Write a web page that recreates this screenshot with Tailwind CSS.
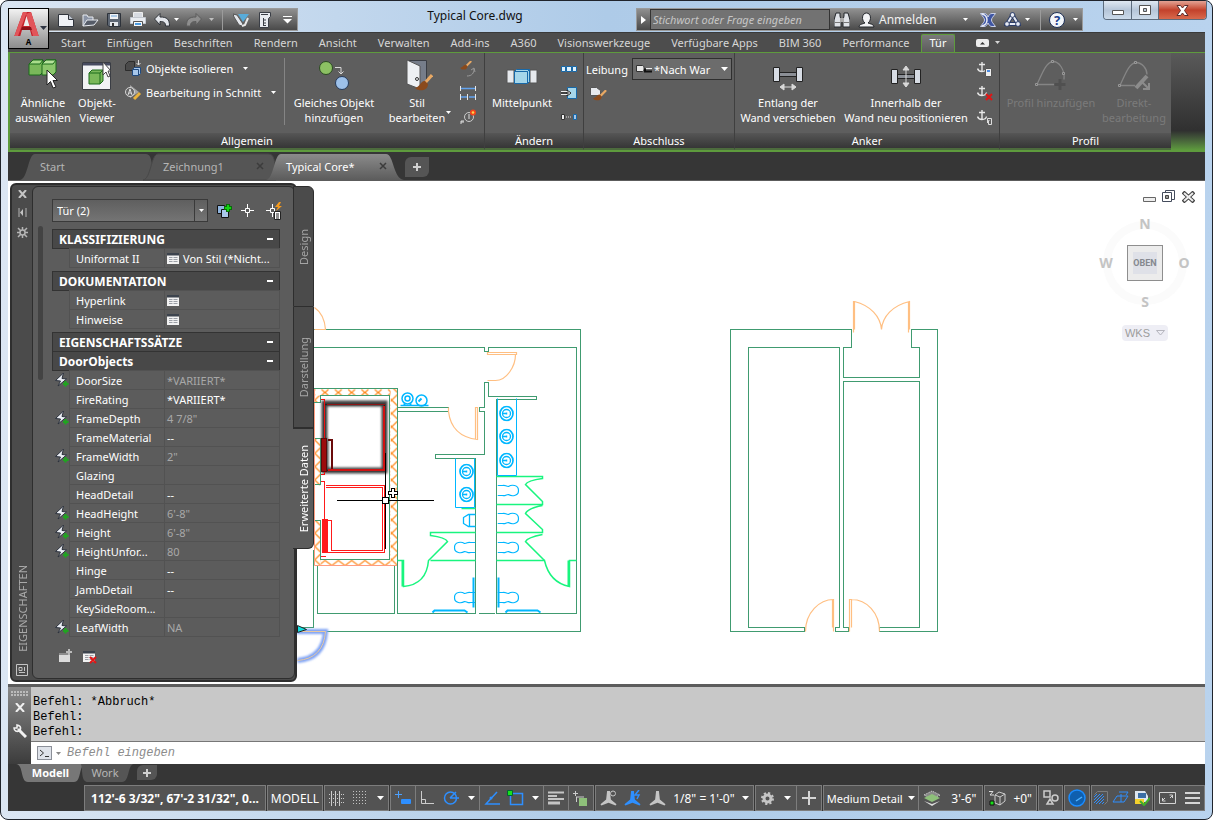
<!DOCTYPE html>
<html lang="de">
<head>
    <meta charset="UTF-8">
    <title>Typical Core.dwg</title>
    <script src="https://cdn.jsdelivr.net/npm/@tailwindcss/browser@4"></script>
</head>
<body class="bg-white font-['Noto_Sans',sans-serif] text-[11px] leading-[15px] text-white cursor-default">

    <!-- shared symbols -->
    <svg class="hidden">
        <symbol id="caret" viewBox="0 0 7 4"><path d="M0 0h7L3.500 4z" fill="currentColor"/></symbol>
        <symbol id="basin" viewBox="-8 -8 16 16"><g fill="none" stroke="#00b7ff"><ellipse rx="6.500" ry="7" stroke-width="1.700"/><circle r="4" stroke-width="1.300"/><path d="M-4 0h4M0-1v2" stroke-width="1.500"/></g></symbol>
        <symbol id="toilet" viewBox="0 -8 22 16"><path d="M0-5H5C8-6 8-4 11-4C14-6 21-6 21 0C21 6 14 6 11 4C8 4 8 6 5 5H0" fill="none" stroke="#00b7ff" stroke-width="1.200"/></symbol>
        <symbol id="anchor" viewBox="0 0 14 14"><path d="M5 1v9M2 3.500h6M0.500 7.500c1 3 3 3 4.500 3s4 0 4.500-3" fill="none" stroke="#e8e8e8" stroke-width="1.400"/></symbol>
        <symbol id="sheet" viewBox="0 0 12 11"><path d="M0 0h12v11H0z" fill="#f2f2f2"/><path d="M0 0h12v2.500H0z" fill="#3c434d"/><path d="M2 4.500h3.500M6.500 4.500h4M2 6.500h3.500M6.500 6.500h4M2 8.500h3.500M6.500 8.500h4" stroke="#9b9fa6"/></symbol>
        <symbol id="bolt" viewBox="0 0 14 14"><path d="M8.500 0L0.500 7.500l5 .5L3 13l8.500-7-4.500-.5z" fill="#eceff5" stroke="#2b313c"/><path d="M10.500 8v5.500M8 10.800h5.500" stroke="#1fa51f" stroke-width="2.200"/></symbol>
        <symbol id="scale" viewBox="0 0 18 18"><path d="M7.500 1h3l1 9 6 5-1 1.500-7.500-3-7.500 3-1-1.500 6-5z" fill="currentColor"/></symbol>
        <symbol id="brush" viewBox="0 0 16 12"><path d="M15 0L8 7" stroke="#e9a964" stroke-width="2.500"/><path d="M8 5c-3-1-4 4-8 4 3 4 10 3 10-2z" fill="#8a4a1c"/></symbol>
    </svg>

    <div class="h-screen flex flex-col rounded-lg border border-[#20242c] bg-[#b9d1ea] bg-gradient-to-r from-[#dbe6f3] via-[#aecbe8] to-[#b9d3ee] px-[7px] pt-[7px] pb-[8px] relative overflow-hidden">

        <!-- title bar -->
        <header class="h-[24px] shrink-0 flex relative">
            <div class="ml-[41px] w-[249px] h-[23px] shrink-0 flex items-center bg-gradient-to-b from-[#909090] to-[#4a4a4a] border border-[#9a9a9a] border-l-0 pl-[5px]">
                <button class="w-6 flex justify-center" aria-label="Neu"><svg width="16" height="14"><path d="M.5 1.500h10l5 5v7H.5z" fill="#f0f2f6" stroke="#30343c"/><path d="M10.500 1.500v5h5" fill="#c2c8d2" stroke="#30343c"/></svg></button>
                <button class="w-6 flex justify-center" aria-label="Öffnen"><svg width="17" height="14"><path d="M1 13V2h4l1 2h5v3" fill="#8b94a6" stroke="#e8ebf0"/><path d="M1 13L5 7h11l-4 5z" fill="#565c68" stroke="#e8ebf0"/></svg></button>
                <button class="w-6 flex justify-center" aria-label="Speichern"><svg width="14" height="14"><path d="M.5.5h13v13H2L.5 12z" fill="#5d6673" stroke="#2d323a"/><path d="M3 1h8v5H3z" fill="#f0f2f5"/><path d="M3 9h8v4H3z" fill="#e3e6ea"/><path d="M5 10h2v3H5z" fill="#333"/><path d="M4 3h6" stroke="#6aa4dc"/></svg></button>
                <button class="w-6 flex justify-center" aria-label="Plotten"><svg width="16" height="15"><path d="M3.500.5h9v6h-9z" fill="#d7dbe2" stroke="#eee"/><path d="M.5 5.500h15v6H.5z" fill="#e9ecf1" stroke="#c2c7cf"/><path d="M3.500 9.500h9v5h-9z" fill="#f6f8fa" stroke="#555"/><path d="M5 12h6" stroke="#4c9be0" stroke-width="2"/></svg></button>
                <button class="w-6 flex justify-center" aria-label="Zurück"><svg width="16" height="14"><path d="M6 .5v3.500c7 0 9.500 2 9.500 9h-4c0-3-1-4.500-5.500-4.500V12L.5 6z" fill="#e3e6eb" stroke="#2f3339"/></svg></button>
                <svg class="text-white" width="5" height="3"><use href="#caret" width="5" height="3"/></svg>
                <button class="w-[30px] flex justify-center" aria-label="Wiederherstellen"><svg width="16" height="14"><path d="M10 .5v3.500c-7 0-9.500 2-9.500 9h4c0-3 1-4.500 5.500-4.500V12l5.500-6z" fill="#8e8e8e" stroke="#5c5c5c"/></svg></button>
                <svg class="text-[#c0c0c0]" width="5" height="3"><use href="#caret" width="5" height="3"/></svg>
                <span class="w-px h-5 ml-2 bg-[#9b9b9b]"></span>
                <button class="ml-2 w-5 flex justify-center" aria-label="Plan"><svg width="17" height="14"><path d="M5 1h11l-6 8z" fill="#58abd9"/><path d="M0 1l4 1 6 9-1 2-3-1-5-8z" fill="#e4e7ec" stroke="#555"/><path d="M15 5l-3 7-3 1" fill="none" stroke="#e8e8e8" stroke-width="2"/></svg></button>
                <button class="ml-1 w-5 flex justify-center" aria-label="Projekt"><svg width="12" height="16"><path d="M.5.5h11v4l-2 2v9h-9z" fill="#e8ebf0" stroke="#3a3e46"/><path d="M2 2.500h7M4.500 6v8M4 8h3M4 11h3M4 13.500h3" stroke="#3a3e46"/></svg></button>
                <svg class="ml-2" width="9" height="8"><path d="M0 .5h9" stroke="#fff"/><path d="M0 3h9L4.500 7.500z" fill="#fff"/></svg>
            </div>
            <h1 class="flex-1 pl-4 text-center text-[#111] text-[12px] leading-4">Typical Core.dwg</h1>
            <div class="w-[447px] h-[23px] shrink-0 flex items-center bg-gradient-to-b from-[#909090] to-[#4a4a4a] border border-[#9a9a9a]">
                <svg class="mx-1" width="5" height="8"><path d="M0 0l5 4-5 4z" fill="#fff"/></svg>
                <input type="text" placeholder="Stichwort oder Frage eingeben" aria-label="Suche" class="w-[180px] h-full bg-[#727272] border border-[#333] px-0.5 italic placeholder:text-[#c6c6c6]">
                <svg class="ml-1" width="16" height="16"><path d="M2 1h4v3l1 4v7H0V8zM10 1h4l2 7v7H9V8l1-4z" fill="#dfe2e7" stroke="#25282d"/><path d="M6 6h4v4H6z" fill="#aaa"/><path d="M1 10.500h5M10 10.500h5" stroke="#777"/></svg>
                <button class="ml-2 flex items-center gap-1 text-[12px] text-[#f0f0f0]"><svg width="17" height="16"><path d="M1 15c0-3 4-3 6-4C3 8 4 1 8.500 1S14 8 10 11c2 1 6 1 6 4z" fill="#f2f3f5" stroke="#25282d"/></svg>Anmelden</button>
                <svg class="ml-auto" width="5" height="3"><use href="#caret" width="5" height="3"/></svg>
                <svg class="ml-3" width="16" height="14"><path d="M.5.5h4c2 0 3 2 3.500 3.500C9 2 10 .5 12 .5h3.500C13 4 11.500 5 11.500 7s1.500 3 4 6.500H12c-2 0-3-1.500-4-3.500-1 2-2 3.500-4 3.500H.5C3 10 4.500 9 4.500 7S3 4 .5.5z" fill="#3e55a3" stroke="#c9d0e8"/><path d="M2 1c4 1 5 4 5 6s-1 5-5 6" fill="none" stroke="#e8ebf5" stroke-width="1.500"/></svg>
                <svg class="ml-2" width="17" height="15"><path d="M8.500 3L3 12h11z" fill="none" stroke="#2b3c66" stroke-width="4"/><path d="M8.500 3L3 12h11z" fill="none" stroke="#e8ecf5" stroke-width="2"/><g fill="#e8ecf5" stroke="#2b3c66"><circle cx="8.500" cy="3" r="2.400"/><circle cx="3" cy="12" r="2.400"/><circle cx="14" cy="12" r="2.400"/></g></svg>
                <svg class="ml-1" width="5" height="3"><use href="#caret" width="5" height="3"/></svg>
                <span class="ml-2.5 w-px h-5 bg-[#9b9b9b]"></span>
                <button class="ml-2 size-4 rounded-full bg-[#f2f5fa] border border-[#1d2f55] text-[#1b3f8e] text-[13px] leading-[14px] font-bold">?</button>
                <svg class="ml-2 mr-1" width="5" height="3"><use href="#caret" width="5" height="3"/></svg>
            </div>
            <div class="ml-[20px] -mt-[7px] mb-[6px] mr-[-2px] w-[104px] h-[19px] shrink-0 flex border border-t-0 border-[#5c6b7c] rounded-b overflow-hidden">
                <button aria-label="Minimieren" class="w-[28px] flex items-end justify-center pb-1 bg-gradient-to-b from-[#dfe8f2] via-[#b5c5d8] to-[#ccdbea] border-r border-[#5c6b7c]"><svg width="12" height="5"><path d="M.5.5h11v4H.5z" fill="#fff" stroke="#555"/></svg></button>
                <button aria-label="Maximieren" class="w-[27px] flex items-center justify-center bg-gradient-to-b from-[#dfe8f2] via-[#b5c5d8] to-[#ccdbea] border-r border-[#5c6b7c]"><svg width="12" height="10"><path d="M.5.5h11v9H.5z" fill="#fff" stroke="#555"/><path d="M4.500 3.500h3v3h-3z" fill="#b9c7d8" stroke="#555"/></svg></button>
                <button aria-label="Schließen" class="flex-1 flex items-center justify-center bg-gradient-to-b from-[#e2a294] via-[#c2412b] to-[#d8694c]"><svg width="13" height="11"><path d="M1 .5h3.500l2 2.500 2-2.500H12L8.500 5.500 12 10.500H8.500l-2-2.500-2 2.500H1l3.500-5z" fill="#fff" stroke="#5a2a2a"/></svg></button>
            </div>
            <!-- application button lies over title bar and tab row -->
            <button aria-label="Anwendungsmenü" class="absolute left-0 top-0 z-10 w-[41px] h-[41px] border border-black bg-gradient-to-b from-[#f2f2f2] to-[#8d8d8d] flex flex-col items-center">
                <svg width="39" height="28"><path d="M5 28L14 3h8l8 25h-7l-2-7h-8l-2 7z" fill="#c3202a"/><path d="M14 3h4l-9 24-4 1zM22 3l-5 2 7 22 6 1z" fill="#e2555a"/><path d="M14.500 17L17.500 7l3 10z" fill="#eee"/><path d="M13 18h9l1 3H12z" fill="#8d1119"/><path d="M31 17h7l-3.500 4z" fill="#2e3442"/></svg>
                <span class="text-black text-[8px] leading-3 font-bold">A</span>
            </button>
        </header>

        <!-- ribbon tabs -->
        <nav class="h-[21px] shrink-0 flex items-center gap-px bg-[#4d4d4d] border-t border-[#3a3a3a] border-b border-b-[#5e9b3d] pl-[43px] text-[#d6d6d6] whitespace-nowrap">
            <a href="#" class="px-2.5">Start</a>
            <a href="#" class="px-2.5">Einfügen</a>
            <a href="#" class="px-2.5">Beschriften</a>
            <a href="#" class="px-2.5">Rendern</a>
            <a href="#" class="px-2.5">Ansicht</a>
            <a href="#" class="px-2.5">Verwalten</a>
            <a href="#" class="px-2.5">Add-ins</a>
            <a href="#" class="px-2.5">A360</a>
            <a href="#" class="px-2.5">Visionswerkzeuge</a>
            <a href="#" class="px-2.5">Verfügbare Apps</a>
            <a href="#" class="px-2.5">BIM 360</a>
            <a href="#" class="px-2.5">Performance</a>
            <a href="#" class="px-2 h-[18px] self-end bg-gradient-to-b from-[#7a7a7a] to-[#5c5c5c] border border-b-0 border-[#5e9b3d] text-white rounded-t-xs">Tür</a>
            <button class="ml-5 flex items-center gap-1.5" aria-label="Multifunktionsleiste minimieren"><svg width="13" height="8"><rect width="13" height="8" rx="2" fill="#ededed"/><path d="M4 5.500h5L6.500 3z" fill="#333"/></svg><svg width="5" height="3"><use href="#caret" width="5" height="3"/></svg></button>
        </nav>

        <!-- ribbon panels -->
        <div class="h-[99px] shrink-0 flex bg-[#5e5e5e] border-l-2 border-b-2 border-[#5e9b3d] text-center whitespace-nowrap">
            <section class="w-[475px] shrink-0 flex flex-col border-r border-[#3f3f3f] border-b-2 border-b-[#4c6b3d]">
                <div class="flex-1 flex pt-[5px]">
                    <button class="w-[66px] h-[68px] flex flex-col items-center">
                        <svg class="shrink-0" width="34" height="37"><path d="M3 6l4-4h10v12l-3 3H3z" fill="#7ab85a" stroke="#1a6b1a"/><path d="M3 6l4-4h10l-3 4z" fill="#a9dc8a" stroke="#1a6b1a"/><path d="M16 6l4-4h10v12l-3 3H16z" fill="#8cc76c" stroke="#1a6b1a"/><path d="M16 6l4-4h10l-3 4z" fill="#b6e29b" stroke="#1a6b1a"/><path d="M21 12v15l3.500-3.500L27 30l3-1-3-6.500h4.500z" fill="#fff" stroke="#222"/></svg>
                        <span>Ähnliche<br>auswählen</span>
                    </button>
                    <button class="w-[42px] h-[68px] flex flex-col items-center">
                        <svg class="shrink-0" width="32" height="37"><path d="M1.500 4.500h28v27h-28z" fill="#f1f2f4" stroke="#3a3d44"/><path d="M2 5h27v2.500H2z" fill="#474b60"/><path d="M8 15l3-3h11v11l-3 3H8z" fill="#7ab85a" stroke="#1a6b1a"/><path d="M8 15h11v11M19 15l3-3" fill="none" stroke="#1a6b1a"/><path d="M22 4v13l3-3 2 5 2-1-2-5h3z" fill="#fff" stroke="#444"/></svg>
                        <span>Objekt-<br>Viewer</span>
                    </button>
                    <div class="ml-1.5 w-[161px] border-r border-[#858585] flex flex-col items-start gap-1 mb-2">
                        <button class="flex items-center gap-1 h-5"><svg width="18" height="17"><path d="M1.500 4.500l3-3h6v7l-2 2h-7z" fill="#4a4a4a" stroke="#2c2c2c"/><path d="M14.500 0v5M12.500 3l2 2 2-2" fill="none" stroke="#e0e0e0"/><path d="M8.500 9.500l2-2h6v6l-2 2h-6z" fill="#a7c7ea" stroke="#214a7e"/><path d="M8.500 9.500h6v6" fill="none" stroke="#214a7e"/></svg>Objekte isolieren<svg class="ml-1.5" width="5" height="3"><use href="#caret" width="5" height="3"/></svg></button>
                        <button class="flex items-center gap-1 h-5"><svg width="18" height="17"><path d="M6 1l9 7-9 6z" fill="#a5a5a5"/><circle cx="6" cy="8" r="4.500" fill="#666" stroke="#d5d5d5"/><path d="M4 11l2-6 2 6M5 9h2" fill="none" stroke="#ddd"/><path d="M10 15l6-6" stroke="#e9b23c" stroke-width="3"/></svg>Bearbeitung in Schnitt<svg class="ml-1.5" width="5" height="3"><use href="#caret" width="5" height="3"/></svg></button>
                    </div>
                    <button class="w-[98px] h-[68px] flex flex-col items-center">
                        <svg class="shrink-0" width="32" height="37"><circle cx="8" cy="10" r="6.500" fill="#8cc063" stroke="#2b4a22"/><path d="M17 9.500h6v6M20.500 13.500l2.500 2.500 2.500-2.500" fill="none" stroke="#d9d9d9"/><circle cx="24" cy="25" r="6.500" fill="#9dc1ea" stroke="#253a5b"/></svg>
                        <span>Gleiches Objekt<br>hinzufügen</span>
                    </button>
                    <button class="w-[68px] h-[68px] flex flex-col items-center relative">
                        <svg class="shrink-0" width="32" height="37"><path d="M6.500 2.500h19v24h-19z" fill="#767d8a" stroke="#3a3d44"/><path d="M6 2l13 6v23L6 26z" fill="#eef0f3" stroke="#555"/><circle cx="16" cy="21" r="1.500" fill="none" stroke="#333"/><path d="M31 17l-8 9" stroke="#e9a964" stroke-width="3"/><path d="M24 23c-4-1-5 6-10 7 4 4 13 3 13-4z" fill="#8a4a1c"/></svg>
                        <span>Stil<br>bearbeiten</span>
                        <svg class="absolute right-0 bottom-[12px]" width="5" height="3"><use href="#caret" width="5" height="3"/></svg>
                    </button>
                    <div class="flex-1 flex flex-col items-center gap-2 pt-[3px]">
                        <svg width="16" height="16"><use href="#brush" width="12" height="9"/><path d="M7 15c5 0 7-3 7-7M11 9l3-2 1 4" fill="none" stroke="#999"/></svg>
                        <svg width="16" height="16"><path d="M.5 1v5M15.500 1v5M.5 9v6M7.500 9v6M15.500 9v6" stroke="#e8e8e8"/><path d="M1 3.500h14M1 12h6M9 12h6" stroke="#62a3f0" stroke-width="1.500"/></svg>
                        <svg width="16" height="16"><circle cx="9" cy="8" r="4.500" fill="none" stroke="#ccc"/><path d="M9 5v5M1 15v-3h3M1 13h3" fill="none" stroke="#ddd"/><circle cx="13" cy="3.500" r="3" fill="#f0441c"/><circle cx="13" cy="3.500" r="1.300" fill="#ffd54a"/></svg>
                    </div>
                </div>
                <h2 class="h-[15px] bg-gradient-to-b from-[#565656] to-[#363636]">Allgemein</h2>
            </section>
            <section class="w-[99px] shrink-0 flex flex-col border-r border-[#3f3f3f] border-b-2 border-b-[#4c6b3d]">
                <div class="flex-1 flex pt-[5px]">
                    <button class="w-[74px] h-[68px] flex flex-col items-center">
                        <svg class="shrink-0" width="32" height="37"><path d="M1 12h7v13H1zM24 12h7v13h-7z" fill="#e6e9ed" stroke="#555"/><path d="M8.500 13.500l2-2h13v12l-2 2h-13z" fill="#a5d6ea" stroke="#1768a8"/><path d="M8.500 13.500h13v12M21.500 13.500l2-2" fill="none" stroke="#1768a8"/></svg>
                        <span>Mittelpunkt</span>
                    </button>
                    <div class="w-5 flex flex-col items-center gap-2 pt-[3px]">
                        <svg width="16" height="16"><path d="M.5 5.500h4v5h-4zM5.500 5.500h5v5h-5zM11.500 5.500h4v5h-4z" fill="#dff0fa" stroke="#1768a8"/></svg>
                        <svg width="16" height="16"><path d="M6.500 2.500h9v11h-9z" fill="#a5d6ea" stroke="#1768a8"/><path d="M0 8h8M6 5l4 3-4 3z" fill="#fff" stroke="#222"/><path d="M0 6.500h6M0 9.500h6" stroke="#eee"/></svg>
                        <svg width="16" height="16"><path d="M.5 5.500h3v5h-3z" fill="#eee" stroke="#333"/><path d="M5 8h6" stroke="#ddd" stroke-dasharray="1 1"/><path d="M12.500 5.500h3v5h-3z" fill="#a5c6ea" stroke="#1768a8"/></svg>
                    </div>
                </div>
                <h2 class="h-[15px] bg-gradient-to-b from-[#565656] to-[#363636]">Ändern</h2>
            </section>
            <section class="w-[151px] shrink-0 flex flex-col border-r border-[#3f3f3f] border-b-2 border-b-[#4c6b3d]">
                <div class="flex-1 pt-[5px] px-0.5">
                    <div class="flex items-center justify-between">
                        <label for="leibung">Leibung</label>
                        <div class="relative">
                            <select id="leibung" class="appearance-none block w-[100px] h-[22px] pl-[21px] bg-[#6c6c6c] border border-[#2f2f2f]"><option>*Nach War</option></select>
                            <svg class="absolute left-1 top-1.5" width="16" height="10"><path d="M.5 1.500h6c2 0 2 6 0 6h-6z" fill="#e8e8e8" stroke="#333"/><path d="M9 4.500v3h7" fill="none" stroke="#111" stroke-width="2"/><path d="M10 4.500h6" stroke="#eee"/></svg>
                            <svg class="absolute right-1 top-[9px]" width="7" height="4"><use href="#caret" width="7" height="4"/></svg>
                        </div>
                    </div>
                    <svg class="mt-1.5 ml-1" width="17" height="16"><path d="M.5 1.500h6l4 3v5h-10z" fill="#e6e9ed" stroke="#555"/><use href="#brush" x="3" y="4" width="14" height="11"/></svg>
                </div>
                <h2 class="h-[15px] bg-gradient-to-b from-[#565656] to-[#363636] text-center">Abschluss</h2>
            </section>
            <section class="w-[265px] shrink-0 flex flex-col border-r border-[#3f3f3f] border-b-2 border-b-[#4c6b3d]">
                <div class="flex-1 flex pt-[5px]">
                    <button class="w-[106px] h-[68px] flex flex-col items-center">
                        <svg class="shrink-0" width="32" height="37"><path d="M7 16.500h18" stroke="#222" stroke-width="5"/><path d="M7 16.500h18" stroke="#8b8f96" stroke-width="3"/><path d="M1.500 9.500h6v14h-6zM24.500 9.500h6v14h-6z" fill="#d7dce4" stroke="#222"/><path d="M10 29h12M12 26l-4 3 4 3zM20 26l4 3-4 3z" fill="#d9d9d9" stroke="#d9d9d9"/></svg>
                        <span>Entlang der<br>Wand verschieben</span>
                    </button>
                    <button class="w-[130px] h-[68px] flex flex-col items-center">
                        <svg class="shrink-0" width="32" height="37"><path d="M7 18.500h18" stroke="#222" stroke-width="5"/><path d="M7 18.500h18" stroke="#8b8f96" stroke-width="3"/><path d="M1.500 11.500h6v14h-6zM24.500 11.500h6v14h-6z" fill="#d7dce4" stroke="#222"/><path d="M16 12v13M13 12l3-4 3 4zM13 25l3 4 3-4z" fill="#d9d9d9" stroke="#d9d9d9"/></svg>
                        <span>Innerhalb der<br>Wand neu positionieren</span>
                    </button>
                    <div class="flex-1 flex flex-col items-center gap-2 pt-[3px]">
                        <svg width="16" height="16"><use href="#anchor" width="14" height="14"/><path d="M8.500 7.500h6v8h-6z" fill="#eee" stroke="#555"/><path d="M10 9h3v2h-3z" fill="#4c8ae0"/></svg>
                        <svg width="16" height="16"><use href="#anchor" width="14" height="14"/><path d="M9 9l6 6M15 9l-6 6" stroke="#e01515" stroke-width="2"/></svg>
                        <svg width="16" height="16"><use href="#anchor" width="14" height="14"/><path d="M10.500 14V9.500h4v6h-3v-4h1" fill="none" stroke="#ddd"/></svg>
                    </div>
                </div>
                <h2 class="h-[15px] bg-gradient-to-b from-[#565656] to-[#363636]">Anker</h2>
            </section>
            <section class="w-[171px] shrink-0 flex flex-col border-b-2 border-b-[#4c6b3d] text-[#7b7b7b]">
                <div class="flex-1 flex pt-[5px]">
                    <button class="w-[102px] h-[68px] flex flex-col items-center" disabled>
                        <svg class="shrink-0" width="32" height="37"><path d="M2 26.500C7 16 11 4 18 3.500c6 0 12 8 11 18M2 26.500h17" fill="none" stroke="#858585" stroke-width="1.300"/><path d="M25 21v11M19.500 26.500h11" stroke="#505050" stroke-width="3"/><path d="M.5 25.500h2v2h-2zM16.500 2.500h2v2h-2zM27.500 14.500h2v2h-2z" fill="#5e5e5e" stroke="#999"/></svg>
                        <span>Profil hinzufügen</span>
                    </button>
                    <button class="w-[64px] h-[68px] flex flex-col items-center" disabled>
                        <svg class="shrink-0" width="32" height="37"><path d="M2 27.500C7 17 11 5 18 4.500c6 0 11 6 11 12M2 27.500h15" fill="none" stroke="#858585" stroke-width="1.300"/><path d="M18 30l11-12" stroke="#8c8c8c" stroke-width="4"/><path d="M24 24l7 7M31 25v6h-6" fill="none" stroke="#8c8c8c" stroke-width="2"/><path d="M.5 26.500h2v2h-2zM16.500 3.500h2v2h-2z" fill="#5e5e5e" stroke="#999"/></svg>
                        <span>Direkt-<br>bearbeitung</span>
                    </button>
                </div>
                <h2 class="h-[15px] bg-gradient-to-b from-[#565656] to-[#363636] text-white">Profil</h2>
            </section>
            <div class="flex-1 bg-gradient-to-b from-[#5a5a5a] via-[#303030] via-80% to-[#5e9b3d]"></div>
        </div>

        <!-- drawing tabs -->
        <nav class="h-[29px] shrink-0 flex items-end bg-[#363636] border-b border-[#5c5c5c] pl-[22px] text-[#b5b5b5]">
            <button class="relative isolate w-[123px] h-[26px] flex items-center pl-2.5 pb-0.5 shrink-0"><svg class="absolute -left-2 top-0 -z-10 overflow-visible" width="131" height="26"><path d="M-2 26c8-1 8-26 15-26h110c6 0 7 4 8 26z" fill="#555"/></svg>Start</button>
            <button class="relative isolate w-[123px] h-[26px] flex items-center pl-2.5 pr-3 pb-0.5 justify-between shrink-0"><svg class="absolute -left-2 top-0 -z-10 overflow-visible" width="131" height="26"><path d="M-2 26c8-1 8-26 15-26h110c6 0 7 4 8 26z" fill="#555" stroke="#484848"/></svg>Zeichnung1<svg width="8" height="8"><path d="M1 1l6 6M7 1L1 7" stroke="#3c3c3c" stroke-width="1.500"/></svg></button>
            <button class="relative isolate w-[123px] h-[26px] flex items-center pl-2.5 pr-3 pb-0.5 justify-between shrink-0 text-white"><svg class="absolute -left-2 top-0 -z-10 overflow-visible" width="131" height="26"><defs><linearGradient id="tabfill" x2="0" y2="1"><stop stop-color="#8b8b8b"/><stop offset="1" stop-color="#5c5c5c"/></linearGradient></defs><path d="M-2 26c8-1 8-26 15-26h105c8 0 7 25 18 26z" fill="url(#tabfill)"/></svg>Typical Core*<svg width="8" height="8"><path d="M1 1l6 6M7 1L1 7" stroke="#3c3c3c" stroke-width="1.500"/></svg></button>
            <button class="ml-1.5 mb-[3px] w-6 h-5 bg-[#555] rounded-tl-md rounded-br-md flex items-center justify-center" aria-label="Neue Zeichnung"><svg width="8" height="8"><path d="M4 0v8M0 4h8" stroke="#d0d0d0" stroke-width="2"/></svg></button>
        </nav>

        <!-- drawing area -->
        <main class="flex-1 min-h-0 relative bg-white overflow-hidden">
            <svg class="absolute left-0 top-0" width="1197" height="503" viewBox="8 181 1197 503">
                <defs>
                    <pattern id="hatchv" x="390" y="393" width="7" height="13.300" patternUnits="userSpaceOnUse"><path d="M7 1L-1 9M7 12.300L-1 4.300" stroke="#ff8a1c" stroke-width="1.200" fill="none"/></pattern>
                    <pattern id="hatchx" x="318" y="388" width="13.300" height="7" patternUnits="userSpaceOnUse"><path d="M3 1l7 6M10 1L3 7" stroke="#ff8a1c" stroke-width="1.200" fill="none"/></pattern>
                    <pattern id="hatchz" x="318" y="559" width="13.300" height="7" patternUnits="userSpaceOnUse"><path d="M0 6L6.600 1L13.300 6" stroke="#ff8a1c" stroke-width="1.200" fill="none"/></pattern>
                    <filter id="glow" x="-20%" y="-20%" width="140%" height="140%"><feGaussianBlur stdDeviation="1"/></filter>
                </defs>
                <g transform="translate(.5 .5)" fill="none">
                    <!-- shaft hatch -->
                    <g stroke="none">
                        <path d="M314 388h76v7h-76z" fill="url(#hatchx)"/>
                        <path d="M390 388h7v177h-7z" fill="url(#hatchv)"/>
                        <path d="M314 395h6v7h-6zM314 438h6v47h-6zM314 520h6v45h-6z" fill="url(#hatchv)"/>
                        <path d="M320 559h70v6h-70z" fill="url(#hatchz)"/>
                    </g>
                    <path d="M397 388V565H314V388" stroke="#ff9d80"/>
                    <!-- walls -->
                    <g stroke="#409b70" shape-rendering="crispEdges">
                        <path d="M313 329H580V631H326M313 347H484V351H488V347H576V613H496M475 613H397V388H313"/>
                        <path d="M488 382H484V407H479V411H484V454H435V458H475V613M488 382V396H536V399H496V613M478 613H494"/>
                        <path d="M397 407H448V411H397M313 402H320V395H389V559H320V520H314M314 438H320V484H314"/>
                        <path d="M313 549V627H297M317 565V613H394V565"/>
                        <path d="M851 329H730V631H804V627H748V347H839V627H835V631H848V627H843V381H919V627H879V631H937V329H911V347H919V377H843V347H851V329"/>
                    </g>
                    <!-- doors -->
                    <g stroke="#ffbf82" stroke-width="1.200">
                        <path d="M314 307Q324 314 325 329H314M487 352h29v2h-29zM515 354C515 366 506 380 495 380H487M448 407v4C450 428 460 437 477 439V407H475V439"/>
                        <path d="M853 332V301H854V329M854 301C870 305 880 316 881 329C882 316 892 305 909 301V329M908 301V332"/>
                        <path d="M805 631C805 612 819 599 833 599V631M832 599V627M849 631V599H851V627M851 599C866 599 879 612 879 631"/>
                    </g>
                    <!-- elevators -->
                    <path d="M324 403H384V470H324zM325 438V473" stroke="#444" stroke-width="6" filter="url(#glow)"/>
                    <path d="M324 404H384V470H324z" stroke="#222" stroke-width="1.500"/>
                    <g shape-rendering="crispEdges">
                        <path d="M326 404H384" stroke="#8d1515"/>
                        <path d="M383 405V469H327" stroke="#d01212" stroke-width="2"/>
                        <path d="M320 399H324V437M320 474H324V437" stroke="#f01010"/>
                        <path d="M321 438h5v33h-5z" fill="#9c0c0c" stroke="#5a0a0a"/>
                        <path d="M327 439H331V468" stroke="#6a0a0a" stroke-width="2"/>
                        <path d="M320 481H324V520" stroke="#ff1a1a"/>
                        <path d="M325 485H384V552H325" stroke="#ff1a1a"/>
                        <path d="M325 487H382V550H331V520H322M325 556H320" stroke="#ff1a1a"/>
                        <path d="M322 519h5v33h-5z" fill="#ff1a1a" stroke="#ff1a1a"/>
                    </g>
                    <!-- toilet partitions -->
                    <g stroke="#19f57f" stroke-width="1.500">
                        <path d="M496 476H542V478Q527 480 525 484L542 501V504H496M542 505Q527 508 525 513L542 529V532H496M542 534Q527 537 525 541L544 560"/>
                        <path d="M496 560H544Q549 582 569 586V560H576M430 560H475M475 532H430V535Q445 537 447 541L428 560Q426 584 403 586V560H397M461 508H475"/>
                        <path d="M568 560V586M402 560V586" stroke-width="2"/>
                    </g>
                    <!-- fixtures -->
                    <g stroke="#00b7ff">
                        <path d="M497 398V475H516V398M455 458V507H474V458"/>
                        <path d="M475 514H468L463 517V523L468 526H475M469 514V526M428 405H400" stroke-width="1.300"/>
                        <g stroke-width="1.500"><circle cx="407" cy="398" r="5.500"/><circle cx="407" cy="398" r="2.500"/><circle cx="421" cy="400" r="5.500"/></g>
                        <path d="M418 401l3-3M404 405v-2M410 405v-2" stroke-width="2"/>
                        <path d="M432 612l2-2h30l3 2M505 612l2-2h30l3 2M473 577V607M498 577V607" stroke-width="2"/>
                    </g>
                    <use href="#basin" x="498" y="405" width="16" height="16"/>
                    <use href="#basin" x="498" y="428" width="16" height="16"/>
                    <use href="#basin" x="498" y="452" width="16" height="16"/>
                    <use href="#basin" x="458" y="463" width="16" height="16"/>
                    <use href="#basin" x="458" y="486" width="16" height="16"/>
                    <use href="#toilet" x="497" y="482" width="22" height="16"/>
                    <use href="#toilet" x="497" y="510" width="22" height="16"/>
                    <use href="#toilet" x="497" y="539" width="22" height="16"/>
                    <use href="#toilet" x="497" y="589" width="22" height="16"/>
                    <use href="#toilet" width="22" height="16" transform="translate(475 539) scale(-1 1)"/>
                    <use href="#toilet" width="22" height="16" transform="translate(475 589) scale(-1 1)"/>
                    <!-- highlighted door -->
                    <path d="M296 631H325Q323 658 297 660" stroke="#7ea2f4" stroke-width="5" filter="url(#glow)"/>
                    <path d="M296 631H325Q323 658 297 660" stroke="#e8c9a0"/>
                    <path d="M297 625L306 629 297 632z" fill="#12dfe0" stroke="#222"/>
                    <!-- crosshair -->
                    <g stroke="#000" shape-rendering="crispEdges">
                        <path d="M336 500H433M385 452V548"/>
                        <path d="M382 497h6v6h-6z" fill="#fff"/>
                        <path d="M391 488h3v3h3v3h-3v3h-3v-3h-3v-3h3z" fill="#fff"/>
                    </g>
                </g>
            </svg>

            <div class="absolute right-2.5 top-[9px] flex items-center gap-1.5">
                <button aria-label="Minimieren"><svg width="13" height="12"><path d="M.5 6.500h12v4H.5z" fill="#eee" stroke="#666"/></svg></button>
                <button aria-label="Wiederherstellen"><svg width="14" height="13"><path d="M3.500.5h9v9h-9z" fill="#fff" stroke="#444c5c"/><path d="M.5 2.500h9v9h-9z" fill="#fff" stroke="#444c5c"/><path d="M3.500 5.500h3v3h-3z" fill="#999" stroke="#444"/></svg></button>
                <button aria-label="Schließen"><svg width="13" height="12"><path d="M1 1l11 10M12 1L1 11" stroke="#444" stroke-width="4"/><path d="M2 2l9 8M11 2L2 10" stroke="#eee" stroke-width="2"/></svg></button>
            </div>

            <!-- view cube -->
            <div class="absolute right-[13px] top-[35px] w-[94px] flex flex-col items-center font-bold text-[14px] leading-4 text-[#c4c4c4]">
                <div class="absolute left-[5px] top-[5px] size-[84px] rounded-full border-8 border-[#fbfbfb]"></div>
                <span class="relative">N</span>
                <div class="relative w-full my-[13px] flex items-center justify-between">
                    <span class="w-4 text-center">W</span>
                    <button class="size-9 bg-[#ececec] border border-[#8e8e8e] flex items-center justify-center"><span class="bg-[#dfe1e8] font-['Roboto',sans-serif] text-[9px] leading-[22px] text-[#85898f]">OBEN</span></button>
                    <span class="w-4 text-center">O</span>
                </div>
                <span class="relative">S</span>
                <button class="mt-[15px] w-[46px] h-4 rounded bg-[#eeeef5] text-[#9c9c9c] font-normal font-['Liberation_Sans',sans-serif] text-[11px] flex items-center justify-center gap-1.5">WKS<svg width="9" height="6"><path d="M.5.500h8L4.500 5z" fill="none" stroke="#b5b5bd"/></svg></button>
            </div>

            <!-- properties palette -->
            <aside class="absolute left-[2px] top-[2px] w-[287px] h-[499px] flex rounded-md bg-[#4b4b4b] border-2 border-[#2e2e2e]">
                <div class="w-[20px] flex flex-col items-center pt-[5px] pb-1 text-[#a9a9a9]">
                    <button aria-label="Schließen"><svg width="9" height="8"><path d="M1 0l7 8M8 0L1 8" stroke="#c4c4c4" stroke-width="2"/></svg></button>
                    <button class="mt-2.5" aria-label="Automatisch ausblenden"><svg width="9" height="9"><path d="M1 0v9M8 0v9" stroke="#b5b5b5"/><path d="M2 4.500L5 1v7z" fill="#c4c4c4"/></svg></button>
                    <button class="mt-2.5" aria-label="Eigenschaften"><svg width="11" height="11"><circle cx="5.500" cy="5.500" r="2.500" fill="none" stroke="#b5b5b5" stroke-width="1.500"/><path d="M5.500 0v3M5.500 8v3M0 5.500h3M8 5.500h3M1 1l3 3M7 7l3 3M10 1L7 4M4 7l-3 3" stroke="#b5b5b5" stroke-width="1.500"/></svg></button>
                    <span class="mt-auto mb-3 [writing-mode:vertical-rl] rotate-180">EIGENSCHAFTEN</span>
                    <svg width="12" height="12"><path d="M.5.500h11v11H.5zM3 8.500h6M3 3.500h3v3H3zM8.500 3v4" fill="none" stroke="#c4c4c4"/></svg>
                </div>
                <div class="flex-1 min-w-0 mt-px mb-px rounded-md border border-[#2e2e2e] bg-[#5c5c5c] flex relative">
                    <span class="absolute left-[5px] top-[39px] w-[5px] h-[154px] rounded-full bg-[#434343]"></span>
                    <div class="ml-[19px] w-[229px] pt-3">
                        <div class="flex items-center">
                            <div class="relative">
                                <select aria-label="Auswahl" class="appearance-none block w-[156px] h-[23px] pl-1 bg-gradient-to-b from-[#5f5f5f] to-[#747474] border border-[#3a3a3a]"><option>Tür (2)</option></select>
                                <span class="absolute right-px top-px w-[13px] h-[21px] border-l border-[#3a3a3a] flex items-center justify-center pointer-events-none"><svg width="5" height="3"><use href="#caret" width="5" height="3"/></svg></span>
                            </div>
                            <button class="ml-2" aria-label="PICKADD"><svg width="17" height="16"><path d="M1.500 2.500h7v8h-7z" fill="#8fb4de" stroke="#111"/><path d="M5.500 6.500h7v8h-7z" fill="#a9c8ea" stroke="#111"/><path d="M12 1v8M8 5h8" stroke="#0a6b0a" stroke-width="4"/><path d="M12 2v6M9 5h6" stroke="#12d412" stroke-width="2"/></svg></button>
                            <button class="ml-2" aria-label="Objekte wählen"><svg width="13" height="13"><path d="M6.500 0v4M6.500 9v4M0 6.500h4M9 6.500h4M4.500 4.500h4v4h-4z" fill="none" stroke="#fff"/></svg></button>
                            <button class="ml-3" aria-label="Schnellauswahl"><svg width="16" height="18"><path d="M6.500 2v4M6.500 11v4M0 8.500h4M4.500 6.500h4v4h-4z" fill="none" stroke="#fff"/><path d="M13 0L9 5h3l-2 4 6-5h-3l2-4z" fill="#f59a1c"/><path d="M8.500 9.500h6v8h-6z" fill="#fff" stroke="#222"/><path d="M10 12h3M10 14h3M10 16h3" stroke="#222"/></svg></button>
                        </div>
                        <table class="mt-[7px] w-[228px] table-fixed border-collapse text-left whitespace-nowrap">
                            <colgroup><col class="w-[17px]"><col class="w-[95px]"><col></colgroup>
                            <tbody id="properties"></tbody>
                        </table>
                        <div class="flex gap-2.5 mt-3 ml-1.5">
                            <button aria-label="Hinzufügen"><svg width="15" height="15"><path d="M1 4h11v9H1z" fill="#dcdcdc"/><path d="M1 4h11v2H1z" fill="#8d8d8d"/><path d="M11 0v6M8 3h6" stroke="#bbb" stroke-width="2"/></svg></button>
                            <button aria-label="Entfernen"><svg width="15" height="15"><use href="#sheet" y="2" width="12" height="11"/><path d="M7 8l6 6M13 8l-6 6" stroke="#e01515" stroke-width="2"/></svg></button>
                        </div>
                    </div>
                </div>
                <!-- side tabs, attached to the right edge of the palette -->
                <div class="absolute left-[281px] top-px w-[21px] flex flex-col text-[#a5a5a5]">
                    <button class="h-[121px] flex items-center justify-center bg-[#4b4b4b] border border-[#2e2e2e] rounded-tr-md"><span class="[writing-mode:vertical-rl] rotate-180">Design</span></button>
                    <button class="h-[121px] flex items-center justify-center bg-[#4b4b4b] border border-t-0 border-[#2e2e2e]"><span class="[writing-mode:vertical-rl] rotate-180">Darstellung</span></button>
                    <button class="h-[121px] flex items-center justify-center bg-[#5c5c5c] border border-l-0 border-[#2e2e2e] rounded-br-md text-white"><span class="[writing-mode:vertical-rl] rotate-180">Erweiterte Daten</span></button>
                </div>
            </aside>
        </main>

        <!-- command line -->
        <section class="h-[80px] shrink-0 flex bg-[#c8c8c8] border-t-3 border-[#5c5c5c] font-['Liberation_Mono',monospace] text-[12px] text-black">
            <div class="w-[23px] flex flex-col items-center gap-1.5 pt-1 bg-gradient-to-b from-[#8a8a8a] to-[#3c3c3c]">
                <svg width="18" height="6"><path d="M0 1h18M0 4h18" stroke="#bbb" stroke-width="2" stroke-dasharray="2 1"/></svg>
                <button aria-label="Schließen"><svg width="10" height="9"><path d="M1 0l8 9M9 0L1 9" stroke="#f0f0f0" stroke-width="2"/></svg></button>
                <button class="mt-1.5" aria-label="Anpassen"><svg width="14" height="14"><path d="M5 5l8 8" stroke="#f0f0f0" stroke-width="3"/><path d="M4 1v3L1 4c0 3 3 4 5 3s3-5-2-6z" fill="none" stroke="#f0f0f0" stroke-width="1.500"/></svg></button>
            </div>
            <div class="flex-1 flex flex-col">
                <pre class="flex-1 pt-2 pl-0.5 font-['Liberation_Mono',monospace]">Befehl: *Abbruch*
Befehl:
Befehl:</pre>
                <div class="h-[23px] flex items-center bg-white border-t border-[#777] pl-1.5">
                    <svg width="15" height="14"><rect x=".5" y=".5" width="14" height="13" fill="#dfe3ea" stroke="#8b8f98"/><path d="M3 4l3.500 3L3 10M8 10.500h4" fill="none" stroke="#333"/></svg>
                    <svg class="ml-1 mr-1.5 text-[#888]" width="5" height="3"><use href="#caret" width="5" height="3"/></svg>
                    <input type="text" aria-label="Befehl" placeholder="Befehl eingeben" class="flex-1 italic placeholder:text-[#8c8c8c]">
                </div>
            </div>
        </section>

        <!-- layout tabs -->
        <nav class="h-[21px] shrink-0 flex items-start bg-[#363636] pl-[14px] text-[#b5b5b5]">
            <button class="relative isolate w-[57px] h-[18px] pb-0.5 font-bold text-white"><svg class="absolute left-0 top-0 -z-10 overflow-visible" width="57" height="18"><path d="M-6 0c8 1 4 18 12 18h46c8 0 4-17 12-18z" fill="#777"/></svg>Modell</button>
            <button class="relative isolate ml-0.5 w-[48px] h-[18px] pb-0.5"><svg class="absolute left-0 top-0 -z-10 overflow-visible" width="48" height="18"><path d="M0 0c2 8 0 18 7 18h34c8 0 5-17 12-18z" fill="#555"/></svg>Work</button>
            <button class="ml-2 mt-px w-[20px] h-[15px] bg-[#555] rounded-tl-md rounded-br-md flex items-center justify-center" aria-label="Neues Layout"><svg width="8" height="8"><path d="M4 0v8M0 4h8" stroke="#d0d0d0" stroke-width="2"/></svg></button>
        </nav>

        <!-- status bar -->
        <footer class="h-[26px] shrink-0 flex justify-end bg-[#363636] whitespace-nowrap text-[12px]">
            <div class="w-[182px] flex items-center justify-center bg-[#535353] border border-[#7d7d7d] font-bold">112'-6 3/32", 67'-2 31/32", 0...</div>
            <button class="ml-px w-[56px] flex items-center justify-center bg-[#535353] border border-[#7d7d7d] text-[12px]">MODELL</button>
            <div class="ml-px w-[65px] flex items-center justify-around bg-[#535353] border border-[#7d7d7d]">
                <svg width="15" height="15"><path d="M2.500 0v15M6.500 0v15M10.500 0v15" stroke="#ccc"/><path d="M0 3.500h15M0 7.500h15M0 11.500h15" stroke="#ccc" stroke-dasharray="1 1"/></svg>
                <svg width="15" height="15"><path d="M0 .5h15M0 3.500h15M0 6.500h15M0 9.500h15M0 12.500h15" stroke="#c2c2c2" stroke-dasharray="1 2"/></svg>
                <svg width="7" height="4"><use href="#caret" width="7" height="4"/></svg>
            </div>
            <div class="ml-px w-[204px] flex bg-[#535353] border border-[#7d7d7d]">
                <button class="w-[25px] flex items-center justify-center border-r border-[#7d7d7d]" aria-label="Dynamische Eingabe"><svg width="17" height="14"><path d="M3.500 0v7M0 3.500h7" stroke="#4aa0ff"/><rect x="6" y="8" width="10" height="5" rx="1" fill="#2e8fff"/></svg></button>
                <div class="w-[64px] flex items-center justify-around border-r border-[#7d7d7d]">
                    <svg width="14" height="14"><path d="M1.500 0v12.500H14M1.500 8.500h4v4" fill="none" stroke="#ccc"/></svg>
                    <svg width="16" height="16"><circle cx="7.500" cy="8" r="6" fill="none" stroke="#2e8fff" stroke-width="1.500"/><path d="M7 8h9M7 8l6-6" stroke="#2e8fff" stroke-width="1.500"/></svg>
                    <svg width="7" height="4"><use href="#caret" width="7" height="4"/></svg>
                </div>
                <div class="w-[64px] flex items-center justify-around border-r border-[#7d7d7d]">
                    <svg width="16" height="14"><path d="M13 1L2 13h14" fill="none" stroke="#2e8fff" stroke-width="1.500"/><circle cx="7" cy="7" r="1.500" fill="#2e8fff"/></svg>
                    <svg width="17" height="16"><path d="M3.500 3.500h12v11h-12z" fill="none" stroke="#2e8fff" stroke-width="1.500"/><path d="M.5.5h5v5h-5z" fill="#19e019" stroke="#063"/></svg>
                    <svg width="7" height="4"><use href="#caret" width="7" height="4"/></svg>
                </div>
                <button class="w-[25px] flex items-center justify-center border-r border-[#7d7d7d]" aria-label="Linienstärke"><svg width="16" height="14"><path d="M0 1.500h16M0 8h16" stroke="#c5c5c5" stroke-width="2"/><path d="M0 5h9" stroke="#c5c5c5" stroke-width="2"/><path d="M0 12h12" stroke="#c5c5c5" stroke-width="3"/></svg></button>
                <button class="flex-1 flex items-center justify-center" aria-label="Auswahlzyklus"><svg width="16" height="15"><path d="M2.500 0v5M0 2.500h5M3 6h8M3.500 6v5" fill="none" stroke="#ccc"/><path d="M6 7h8v8H6z" fill="#8ec07a"/></svg></button>
            </div>
            <div class="ml-px w-[159px] flex items-center justify-between px-1 bg-[#535353] border border-[#7d7d7d]">
                <svg class="text-[#c5c5c5]" width="17" height="17"><use href="#scale" width="17" height="17"/><circle cx="13" cy="3.500" r="2.500" fill="#535353" stroke="#c5c5c5"/></svg>
                <svg class="text-[#2e8fff]" width="17" height="17"><use href="#scale" width="17" height="17"/><path d="M15 0l-4 5h4l-2 4" fill="none" stroke="#2e8fff" stroke-width="1.500"/></svg>
                <svg class="text-[#c5c5c5]" width="17" height="17"><use href="#scale" width="17" height="17"/></svg>
                <span>1/8" = 1'-0"</span>
                <svg width="7" height="4"><use href="#caret" width="7" height="4"/></svg>
            </div>
            <div class="ml-px w-[67px] flex bg-[#535353] border border-[#7d7d7d]">
                <div class="w-[41px] flex items-center justify-around border-r border-[#7d7d7d]">
                    <svg width="13" height="13"><circle cx="6.500" cy="6.500" r="3.500" fill="none" stroke="#c5c5c5" stroke-width="3"/><circle cx="6.500" cy="6.500" r="5.500" fill="none" stroke="#c5c5c5" stroke-width="2" stroke-dasharray="2.200 2.100"/></svg>
                    <svg width="7" height="4"><use href="#caret" width="7" height="4"/></svg>
                </div>
                <button class="flex-1 flex items-center justify-center" aria-label="Hinzufügen"><svg width="14" height="14"><path d="M7 0v14M0 7h14" stroke="#d5d5d5" stroke-width="2"/></svg></button>
            </div>
            <div class="ml-px w-[160px] flex bg-[#535353] border border-[#7d7d7d]">
                <button class="w-[95px] flex items-center justify-around border-r border-[#7d7d7d] text-[11px]">Medium Detail<svg width="7" height="4"><use href="#caret" width="7" height="4"/></svg></button>
                <div class="flex-1 flex items-center justify-around">
                    <svg width="16" height="16"><path d="M0 5l8-4 8 4-8 4z" fill="#888" stroke="#ddd" stroke-dasharray="1 1"/><path d="M0 8l8-4 8 4-8 4z" fill="#8ec07a"/><path d="M0 11l8 3 8-3-8 5z" fill="#ddd"/></svg>
                    <span>3'-6"</span>
                </div>
            </div>
            <div class="ml-px w-[53px] flex items-center justify-between px-1 bg-[#535353] border border-[#7d7d7d]">
                <svg class="shrink-0" width="17" height="16"><path d="M6 5l4-3 6 2v7l-5 4-5-2zM6 5l5 2v8M11 7l5-3" fill="none" stroke="#ccc"/><path d="M0 1.500h4L1 5h4" fill="none" stroke="#ddd"/><path d="M1 11h4v4H1z" fill="#19e019" stroke="#111"/></svg>
                <span>+0"</span>
            </div>
            <div class="ml-px w-[25px] flex items-center justify-center bg-[#535353] border border-[#7d7d7d]"><svg width="16" height="16"><path d="M1 1h6v6H1zM4 14l3-5 3 5z" fill="none" stroke="#ccc" stroke-width="1.500"/><circle cx="12" cy="8" r="3" fill="none" stroke="#ccc" stroke-width="1.500"/></svg></div>
            <div class="ml-px w-[26px] flex items-center justify-center bg-[#535353] border border-[#7d7d7d]"><svg width="18" height="18"><circle cx="9" cy="9" r="8" fill="#0f5fae" stroke="#1a8cff" stroke-width="1.500"/><path d="M8 12l6-4" stroke="#4ab0ff" stroke-width="1.500"/></svg></div>
            <div class="ml-px w-[62px] flex items-center justify-around bg-[#535353] border border-[#7d7d7d]">
                <svg width="14" height="14"><path d="M.5 3.500l3-3h10v10l-3 3" fill="none" stroke="#7d7d7d"/><path d="M0 6l3-3M0 9l6-6M0 12l9-9M2 13l8-8M5 13l5-5M8 13l2-2" stroke="#2e8fff"/></svg>
                <svg width="17" height="14"><path d="M5 5h11l-4 6H1zM7 1h9l-2 3M9 3v8" fill="none" stroke="#2e8fff"/></svg>
                <svg width="16" height="16"><path d="M1 1h10l3 5v6H1z" fill="#dde6f0"/><path d="M4 3h8v5H4z" fill="#3b6ea5"/><path d="M1 9h9v5H1z" fill="#f4cf2d"/><path d="M6 11l4 4 6-7" fill="none" stroke="#3fae2a" stroke-width="2"/></svg>
            </div>
            <div class="ml-px w-[51px] flex items-center justify-around bg-[#535353] border border-[#7d7d7d]">
                <svg width="17" height="12"><path d="M.5.500h16v11H.5z" fill="none" stroke="#d5d5d5"/><path d="M3 9l3-3M3.500 6v3h3M14 3l-3 3M10.500 3h3v3" fill="none" stroke="#d5d5d5"/></svg>
                <svg width="15" height="12"><path d="M0 1h15M0 6h15M0 11h15" stroke="#d5d5d5" stroke-width="2"/></svg>
            </div>
        </footer>
    </div>

    <script>
        // rows of the palette: a group header, a gap, or name / value / flag for automatic data
        const rows = [
            { group: 'KLASSIFIZIERUNG' },
            { name: 'Uniformat II', value: 'Von Stil (*Nicht...', sheet: true },
            { gap: true },
            { group: 'DOKUMENTATION' },
            { name: 'Hyperlink', value: '', sheet: true },
            { name: 'Hinweise', value: '', sheet: true },
            { gap: true },
            { group: 'EIGENSCHAFTSSÄTZE' },
            { group: 'DoorObjects' },
            { name: 'DoorSize', value: '*VARIIERT*', auto: true },
            { name: 'FireRating', value: '*VARIIERT*' },
            { name: 'FrameDepth', value: '4 7/8"', auto: true },
            { name: 'FrameMaterial', value: '--' },
            { name: 'FrameWidth', value: '2"', auto: true },
            { name: 'Glazing', value: '' },
            { name: 'HeadDetail', value: '--' },
            { name: 'HeadHeight', value: '6\'-8"', auto: true },
            { name: 'Height', value: '6\'-8"', auto: true },
            { name: 'HeightUnfor...', value: '80', auto: true },
            { name: 'Hinge', value: '--' },
            { name: 'JambDetail', value: '--' },
            { name: 'KeySideRoom...', value: '' },
            { name: 'LeafWidth', value: 'NA', auto: true }
        ];

        document.getElementById('properties').innerHTML = rows.map(row => {
            if (row.gap) return '<tr class="h-1"><td colspan="3"></td></tr>';
            if (row.group) {
                return `<tr class="h-[19px] bg-[#484848] border border-[#333]"><th colspan="3" class="px-1.5 font-bold text-[12px] leading-[17px]"><span class="flex items-center justify-between">${row.group}<svg width="6" height="2"><path d="M0 1h6" stroke="#fff" stroke-width="2"/></svg></span></th></tr>`;
            }
            const icon = row.auto ? '<svg width="14" height="14"><use href="#bolt" width="14" height="14"/></svg>' : '';
            const sheet = row.sheet ? '<svg width="12" height="11"><use href="#sheet" width="12" height="11"/></svg>' : '';
            const color = row.auto ? 'text-[#a8a8a8]' : 'text-white';
            return `<tr class="h-[19px]"><td class="pl-0.5">${icon}</td><th class="pl-1.5 font-normal leading-[17px] border border-[#525252]">${row.name}</th><td class="pl-0.5 leading-[17px] border border-[#525252] ${color}"><span class="flex items-center gap-1">${sheet}${row.value}</span></td></tr>`;
        }).join('');
    </script>
</body>
</html>
